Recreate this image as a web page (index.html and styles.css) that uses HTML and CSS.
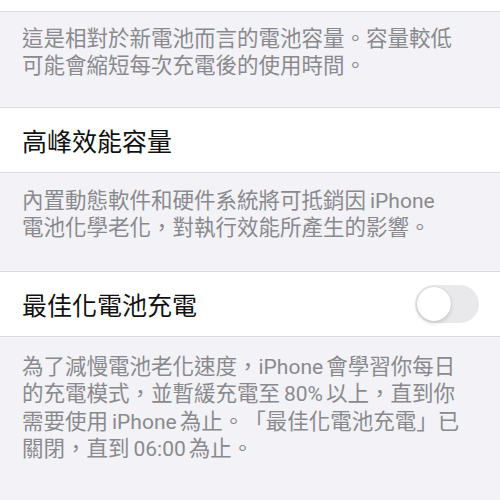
FILE: index.html
```html
<!DOCTYPE html>
<html lang="zh-Hant">
<head>
<meta charset="utf-8">
<link rel="stylesheet" href="styles.css">
</head>
<body>
<div class="group-end"></div>
<p class="footer">這是相對於新電池而言的電池容量。容量較低<br>可能會縮短每次充電後的使用時間。</p>
<div class="cell"><span class="title">高峰效能容量</span></div>
<p class="footer footer-mid">內置動態軟件和硬件系統將可抵銷因<span class="en">iPhone</span><br>電池化學老化，對執行效能所產生的影響。</p>
<div class="cell"><span class="title">最佳化電池充電</span><span class="toggle"><span class="knob"></span></span></div>
<p class="footer footer-last">為了減慢電池老化速度，<span class="en en-after-punct">iPhone</span>會學習你每日<br>的充電模式，並暫緩充電至<span class="en">80%</span>以上，直到你<br>需要使用<span class="en">iPhone</span>為止。「最佳化電池充電」已<br>關閉，直到<span class="en">06:00</span>為止。</p>
</body>
</html>
```
FILE: styles.css
```css
html, body {
  margin: 0;
  padding: 0;
  background: #f2f2f7;
  font-family: "Noto Sans CJK TC", "Noto Sans", sans-serif;
  text-spacing-trim: space-all;
}
.group-end {
  height: 11px;
  background: #fff;
  border-bottom: 1px solid #dcdce0;
}
.footer {
  margin: 0;
  padding: 11px 22px 30px;
  font-size: 21.5px;
  line-height: 27px;
  color: #8a8a8e;
}
.footer-mid {
  padding-top: 12px;
  padding-bottom: 32px;
}
.footer-last {
  padding-top: 14px;
  line-height: 27.3px;
}
.en {
  font-family: Roboto, "Liberation Sans", sans-serif;
  font-size: 21px;
  line-height: 16px;
  margin: 0 3px 0 4px;
}
.en-after-punct {
  margin-left: 0;
}
.cell {
  background: #fff;
  border-top: 1px solid #dcdce0;
  border-bottom: 1px solid #dcdce0;
  height: 64px;
  padding: 0 21px 0 22px;
  display: flex;
  align-items: center;
  justify-content: space-between;
}
.title {
  font-size: 25px;
  color: #111;
}
.toggle {
  width: 64px;
  height: 38px;
  border-radius: 19px;
  background: #e9e9eb;
  display: flex;
  align-items: center;
  padding: 0 2px;
  box-sizing: border-box;
}
.knob {
  width: 34px;
  height: 34px;
  border-radius: 50%;
  background: #fff;
  box-shadow: 0 2px 4px rgba(0,0,0,0.15), 0 0 1px rgba(0,0,0,0.2);
}
```
